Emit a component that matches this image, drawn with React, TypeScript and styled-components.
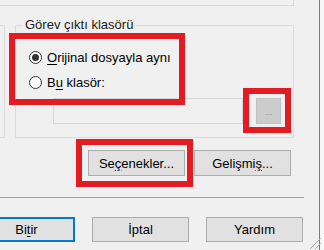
import React from "react"
import styled, { createGlobalStyle } from "styled-components"

const GlobalStyle = createGlobalStyle`
	html, body {
		margin: 0;
		padding: 0;
		background: #f0f0f0;
		overflow: hidden;
	}
	body {
		font-family: "Liberation Sans", Arial, sans-serif;
		font-size: 13px;
		color: #000;
	}
`

const Window = styled.div`
	position: relative;
	display: flex;
	width: 324px;
	height: 250px;
	background: #f0f0f0;
`

const Page = styled.div`
	position: relative;
	display: flex;
	flex-direction: column;
	flex: none;
	width: 319px;
	height: 250px;
	overflow: hidden;
	border-right: 1px solid #7a7a7a;
`

const Outside = styled.div`
	flex: 1;
	background: #f7f7f7;
`

const PrevBox = styled.div`
	flex: none;
	height: 5px;
	width: 313px;
	margin-left: -20px;
	border-right: 1px solid #dcdcdc;
	border-bottom: 1px solid #dcdcdc;
`

const GroupRow = styled.div`
	display: flex;
	align-items: flex-start;
	margin-top: 11px;
`

const SideBox = styled.div`
	flex: none;
	width: 4px;
	height: 111px;
	margin-top: 8px;
	border-top: 1px solid #dcdcdc;
	border-right: 1px solid #dcdcdc;
	border-bottom: 1px solid #dcdcdc;
`

const GroupBox = styled.fieldset`
	box-sizing: border-box;
	flex: none;
	width: 279px;
	height: 121px;
	margin: 0 0 0 10px;
	padding: 0;
	min-width: 0;
	border: 1px solid #dcdcdc;
`

const Legend = styled.legend`
	margin-left: 7px;
	padding: 0 2px;
	line-height: 16px;
	color: #1a1a1a;
`

const RadioList = styled.div`
	display: flex;
	flex-direction: column;
	padding-top: 12px;
`

const RadioRow = styled.label`
	display: flex;
	align-items: center;
	gap: 5px;
	height: 25px;
	padding-left: 13px;
`

const RadioDot = styled.span<{ $checked?: boolean }>`
	box-sizing: border-box;
	position: relative;
	flex: none;
	width: 13px;
	height: 13px;
	border: 1px solid #333;
	border-radius: 50%;
	background: #fff;

	&::after {
		content: "";
		display: ${(p) => (p.$checked ? "block" : "none")};
		position: absolute;
		left: 2px;
		top: 2px;
		width: 7px;
		height: 7px;
		border-radius: 50%;
		background: #333;
	}
`

const U = styled.span`
	text-decoration: underline;
	text-underline-offset: 2px;
`

const FieldRow = styled.div`
	display: flex;
	gap: 13px;
	margin-top: 3px;
	padding-left: 37px;
`

const PathField = styled.div`
	box-sizing: border-box;
	width: 190px;
	height: 26px;
	border: 1px solid #d6d6d6;
	background: #f0f0f0;
`

const BrowseButton = styled.div`
	box-sizing: border-box;
	display: flex;
	align-items: flex-end;
	justify-content: center;
	width: 25px;
	height: 26px;
	padding-bottom: 6px;
	border: 1px solid #c2c2c2;
	background: #cccccc;
	color: #8c8c8c;
	font-size: 9px;
	line-height: 9px;
`

const ActionRow = styled.div<{ $gap: number; $right: number; $top: number }>`
	display: flex;
	justify-content: flex-end;
	gap: ${(p) => p.$gap}px;
	margin-top: ${(p) => p.$top}px;
	padding-right: ${(p) => p.$right}px;
`

const Button = styled.div<{ $default?: boolean; $height?: number }>`
	box-sizing: border-box;
	display: flex;
	align-items: center;
	justify-content: center;
	flex: none;
	width: 97px;
	height: ${(p) => p.$height ?? 26}px;
	border: 1px solid ${(p) => (p.$default ? "#0078d7" : "#adadad")};
	box-shadow: ${(p) => (p.$default ? "inset 0 0 0 1px #0078d7" : "none")};
	background: #e1e1e1;
	color: #000;
	white-space: nowrap;
`

const Separator = styled.div`
	flex: none;
	width: 304px;
	height: 1px;
	margin-top: 21px;
	background: #a0a0a0;
`

const Marker = styled.div<{ $x: number; $y: number; $w: number; $h: number }>`
	position: absolute;
	box-sizing: border-box;
	left: ${(p) => p.$x}px;
	top: ${(p) => p.$y}px;
	width: ${(p) => p.$w}px;
	height: ${(p) => p.$h}px;
	border: 6px solid #e31b23;
	pointer-events: none;
`

const Grip = styled.svg`
	position: absolute;
	left: 308px;
	top: 236px;
`

export default function App() {
	return (
		<Window>
			<GlobalStyle />
			<Page>
				<PrevBox />
				<GroupRow>
					<SideBox />
					<GroupBox>
						<Legend>Görev çıktı klasörü</Legend>
						<RadioList>
							<RadioRow>
								<RadioDot $checked />
								<span>
									<U>O</U>rijinal dosyayla aynı
								</span>
							</RadioRow>
							<RadioRow>
								<RadioDot />
								<span>
									B<U>u</U> klasör:
								</span>
							</RadioRow>
						</RadioList>
						<FieldRow>
							<PathField />
							<BrowseButton>...</BrowseButton>
						</FieldRow>
					</GroupBox>
				</GroupRow>

				<ActionRow $gap={9} $right={28} $top={12}>
					<Button>
						Se<U>ç</U>enekler...
					</Button>
					<Button>
						Gelişmi<U>ş</U>...
					</Button>
				</ActionRow>

				<Separator />

				<ActionRow $gap={17} $right={16} $top={19}>
					<Button $default $height={25}>
						Bi<U>t</U>ir
					</Button>
					<Button $height={25}>İptal</Button>
					<Button $height={25}>Yardım</Button>
				</ActionRow>

				<Marker $x={9} $y={33} $w={176} $h={72} />
				<Marker $x={243} $y={88} $w={48} $h={45} />
				<Marker $x={76} $y={139} $w={117} $h={48} />
			</Page>
			<Outside />
			<Grip width="14" height="14" viewBox="0 0 14 14">
				<line x1="13" y1="2" x2="2" y2="13" stroke="#a8a8a8" strokeWidth="1" />
				<line x1="13" y1="7" x2="7" y2="13" stroke="#a8a8a8" strokeWidth="1" />
			</Grip>
		</Window>
	)
}
